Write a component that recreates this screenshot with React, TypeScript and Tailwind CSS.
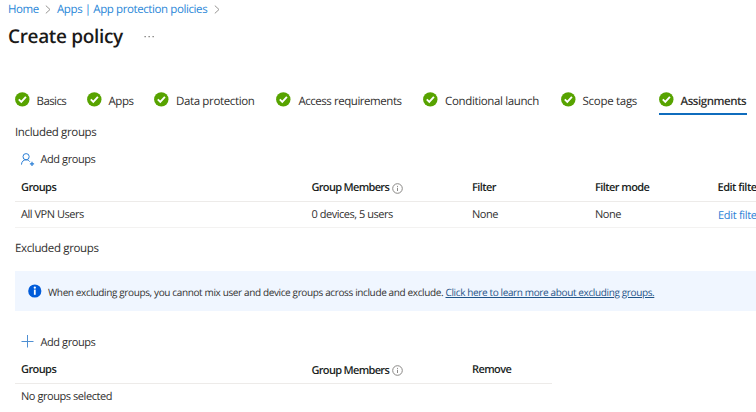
import type { ReactNode } from "react";

function Chevron() {
  return (
    <svg className="block h-[9px] w-[6px] shrink-0" viewBox="0 0 6 9" fill="none" stroke="#979593" strokeWidth="1">
      <path d="M.8.6 5 4.5.8 8.4" />
    </svg>
  );
}

function Check() {
  return (
    <svg className="block size-[15px] shrink-0" viewBox="0 0 15 15" fill="none">
      <circle cx="7.3" cy="7.4" r="7.2" fill="#57a300" />
      <path d="m3.8 7.3 2.5 2.5 4.6-4.9" stroke="#fff" strokeWidth="1.9" />
    </svg>
  );
}

function InfoOutline() {
  return (
    <svg className="ml-[3px] block size-[11px] shrink-0" viewBox="0 0 11 11" fill="none" stroke="#8a8886">
      <circle cx="5.5" cy="5.5" r="4.8" strokeWidth="1" />
      <path d="M5.5 4.8v3.2M5.5 2.9v1" strokeWidth="1" />
    </svg>
  );
}

function InfoFilled() {
  return (
    <svg className="block size-[14px] shrink-0" viewBox="0 0 14 14">
      <circle cx="6.8" cy="7" r="6.6" fill="#015cda" />
      <circle cx="6.8" cy="3.7" r="1.15" fill="#fff" />
      <path d="M5.9 5.6h1.8v5.2H5.9z" fill="#fff" />
    </svg>
  );
}

function PersonAdd() {
  return (
    <svg className="block size-[14px] shrink-0" viewBox="0 0 14 14" fill="none" stroke="#2b7fd6" strokeWidth="1">
      <circle cx="5.1" cy="3.7" r="3.1" />
      <path d="M.5 11.6c0-2.9 1.9-4.8 4.6-4.8 1.7 0 2.9.7 3.7 1.9" />
      <path d="M11 8.8v4.2M8.9 10.9h4.2" strokeWidth="1.2" />
    </svg>
  );
}

function Plus() {
  return (
    <svg className="block size-[14px] shrink-0" viewBox="0 0 14 14" stroke="#4f8fd2" strokeWidth="1">
      <path d="M6.5 0v12.5M.5 6.5h12" />
    </svg>
  );
}

const tabs = [
  { label: "Basics", width: "w-[72px]", track: "tracking-[-0.6px]" },
  { label: "Apps", width: "w-[67.3px]", track: "tracking-[-0.5px]" },
  { label: "Data protection", width: "w-[122.5px]", track: "tracking-[-0.35px]" },
  { label: "Access requirements", width: "w-[146.7px]", track: "tracking-[-0.45px]" },
  { label: "Conditional launch", width: "w-[137.5px]", track: "tracking-[-0.36px]" },
  { label: "Scope tags", width: "w-[98px]", track: "tracking-[-0.3px]" },
];

function Cell({ className, children }: { className: string; children?: ReactNode }) {
  return <div className={`flex shrink-0 items-center ${className}`}>{children}</div>;
}

export default function App() {
  return (
    <div className="h-[412px] w-[756px] overflow-hidden bg-white font-['Open_Sans','Noto_Sans',sans-serif] text-[11.5px] leading-4 whitespace-nowrap text-[#323130] [text-rendering:geometricPrecision]">
      <nav className="flex h-[19px] items-center pl-2 text-[#2b88d8]">
        <span className="w-[37px] tracking-[-0.4px]">Home</span>
        <Chevron />
        <span className="ml-[6px] w-[157px] tracking-[-0.4px]">Apps | App protection policies</span>
        <Chevron />
      </nav>
      <header className="flex h-[34px] items-center pl-2">
        <h1 className="w-[136px] text-[19px] leading-6 font-semibold tracking-[-0.34px] text-[#1b1a19]">Create policy</h1>
        <svg className="h-[3px] w-[11px]" viewBox="0 0 11 3" fill="#797775">
          <path d="M.5 1h1.3v1.3H.5zM4.5 1h1.3v1.3H4.5zM8.5 1h1.3v1.3H8.5z" />
        </svg>
      </header>
      <div className="mt-[34px] flex h-[28px] pl-[14.6px]">
        {tabs.map((t) => (
          <div key={t.label} className={`flex shrink-0 pt-[5px] ${t.width}`}>
            <Check />
            <span className={`ml-[7px] pt-[2px] ${t.track}`}>{t.label}</span>
          </div>
        ))}
        <div className="flex w-[88px] shrink-0 border-b-2 border-[#0f6cbd] pt-[5px]">
          <Check />
          <span className="ml-[7px] pt-[2px] font-semibold tracking-[-0.46px]">Assignments</span>
        </div>
      </div>

      <h2 className="mt-[10px] pl-[15px] tracking-[-0.35px]">Included groups</h2>
      <div className="mt-[9px] flex h-[19px] items-center pl-[21px] text-[11px]">
        <PersonAdd />
        <span className="ml-[5.5px] pt-px tracking-[-0.42px]">Add groups</span>
      </div>
      <div className="mt-[5px] ml-[15px] text-[11px]">
        <div className="flex h-[28px] items-center border-b border-[#edebe9] pl-[6px] font-semibold tracking-[-0.58px] text-[#201f1e]">
          <Cell className="w-[290.5px]">Groups</Cell>
          <Cell className="w-[160.5px] pt-px tracking-[-0.68px]">Group Members<InfoOutline /></Cell>
          <Cell className="w-[123px]">Filter</Cell>
          <Cell className="w-[122.5px]">Filter mode</Cell>
          <Cell className="tracking-[-0.5px]">Edit filter</Cell>
        </div>
        <div className="flex h-[26px] items-center border-b border-[#f3f2f1] pt-px pl-[6px] tracking-[-0.47px]">
          <Cell className="w-[290.5px]">All VPN Users</Cell>
          <Cell className="w-[160.5px]">0 devices, 5 users</Cell>
          <Cell className="w-[123px]">None</Cell>
          <Cell className="w-[123px]">None</Cell>
          <Cell className="pt-px tracking-[-0.3px] text-[#2b7fd6]">Edit filter</Cell>
        </div>
      </div>

      <h2 className="mt-[13px] pl-[15px] tracking-[-0.35px]">Excluded groups</h2>
      <div className="mt-[14px] ml-[15px] flex h-[40px] items-center bg-[#f0f6ff] pl-[13px] text-[10px] tracking-[-0.37px]">
        <InfoFilled />
        <span className="ml-[6px] w-[397.5px] pt-px">When excluding groups, you cannot mix user and device groups across include and exclude.</span>
        <a className="pt-px text-[#1f5488] underline">Click here to learn more about excluding groups.</a>
      </div>
      <div className="mt-[22px] flex h-[18px] items-center pl-[21px] text-[11px]">
        <Plus />
        <span className="ml-[5.5px] pt-[2px] tracking-[-0.42px]">Add groups</span>
      </div>
      <div className="mt-[5px] ml-[15px] w-[537px] text-[11px]">
        <div className="flex h-[28px] items-center border-b border-[#edebe9] pt-px pl-[6px] font-semibold tracking-[-0.58px] text-[#201f1e]">
          <Cell className="w-[290.5px]">Groups</Cell>
          <Cell className="w-[160.5px] pt-px tracking-[-0.68px]">Group Members<InfoOutline /></Cell>
          <Cell className="">Remove</Cell>
        </div>
        <div className="flex h-[26px] items-center pl-[6px] tracking-[-0.44px]">No groups selected</div>
      </div>
    </div>
  );
}
